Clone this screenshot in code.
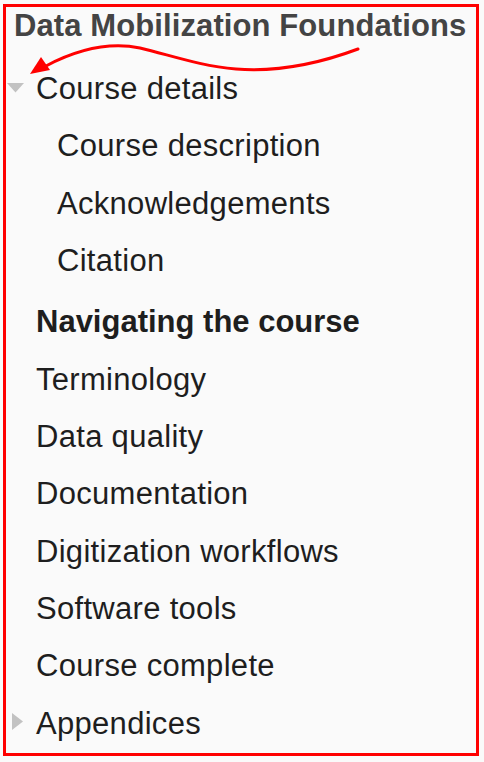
import React from 'react';

const sub = ['Course description', 'Acknowledgements', 'Citation'];
const rest = ['Terminology', 'Data quality', 'Documentation', 'Digitization workflows', 'Software tools', 'Course complete'];

function Arrow() {
  return (
    <svg className="absolute left-0 top-0 pointer-events-none" width="484" height="120" viewBox="0 0 484 120">
      <path
        d="M358 49 C318 64 276 72 236 69 C200 66 170 55 140 48 C110 42 80 48 46 66"
        fill="none"
        stroke="#ff0000"
        strokeWidth="3"
        strokeLinecap="round"
      />
      <polygon points="30,74 41,57 50,70" fill="#ff0000" />
    </svg>
  );
}

export default function App() {
  return (
    <div className="relative w-[484px] h-[762px] bg-[#fafafa] pt-[4px] pl-[3px] font-['Liberation_Sans',Arial,sans-serif]">
      <div className="w-[476px] h-[752px] border-[3px] border-[#ff0000]">
        <h1 className="pl-[8px] pt-[1px] text-[31px] leading-[36px] font-bold text-[#444444] tracking-[0.1px]">
          Data Mobilization Foundations
        </h1>
        <ul className="mt-[16px] text-[31px] leading-[57.33px] text-[#1e1e1e] tracking-[0.3px]">
          <li className="relative pl-[30px]">
            <svg className="absolute left-[1px] top-[23px]" width="17" height="10" viewBox="0 0 17 10">
              <polygon points="0,0 17,0 8.5,9.5" fill="#c2c2c2" />
            </svg>
            Course details
            <ul className="mb-[4px]">
              {sub.map(s => (
                <li key={s} className="pl-[21px]">{s}</li>
              ))}
            </ul>
          </li>
          <li className="pl-[30px] font-bold tracking-[0px]">Navigating the course</li>
          {rest.map(r => (
            <li key={r} className="pl-[30px]">{r}</li>
          ))}
          <li className="relative pl-[30px]">
            <svg className="absolute left-[6px] top-[18px]" width="11" height="18" viewBox="0 0 11 18">
              <polygon points="0,0 11,8.5 0,17" fill="#c2c2c2" />
            </svg>
            Appendices
          </li>
        </ul>
      </div>
      <Arrow />
    </div>
  );
}
